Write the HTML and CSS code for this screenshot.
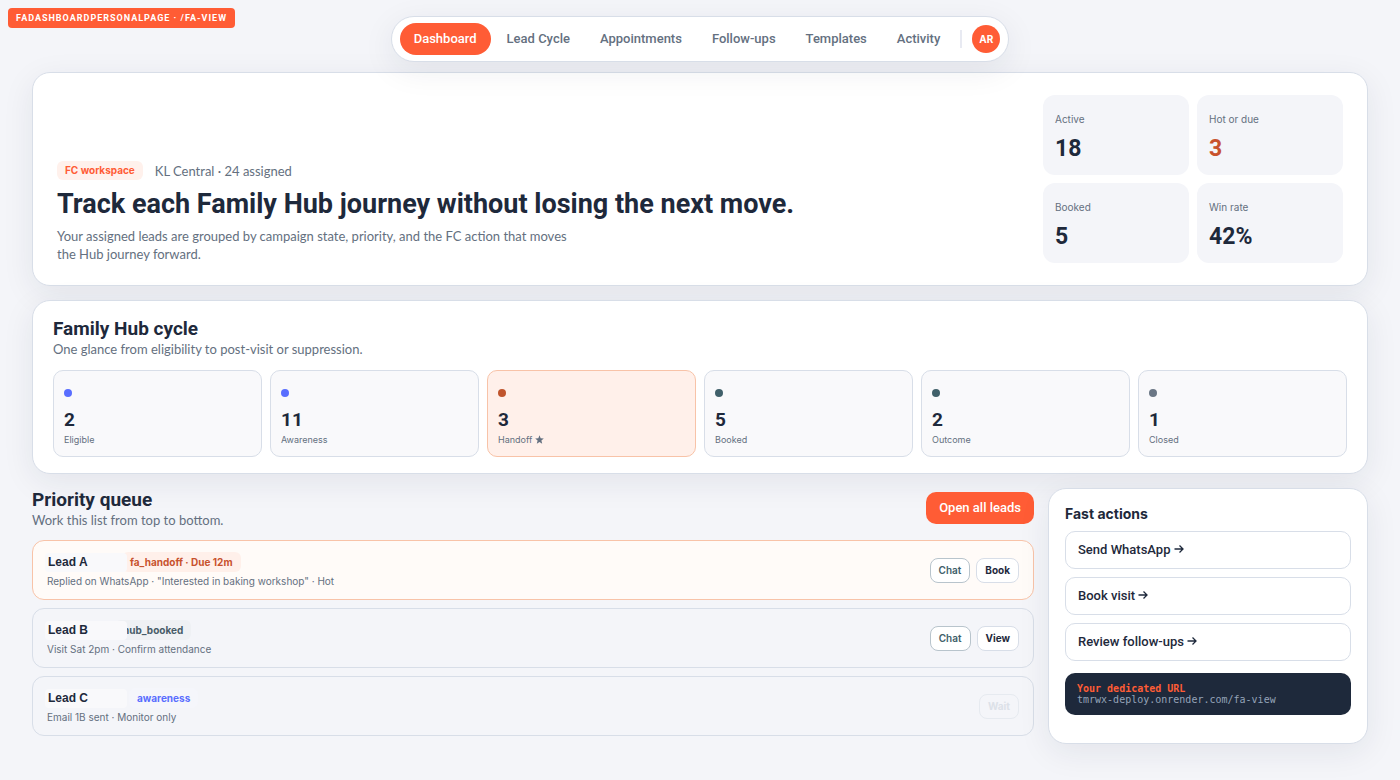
FILE: index.html
```
<!DOCTYPE html>
<html lang="en">
<head>
    <meta charset="UTF-8">
    <meta name="viewport" content="width=device-width, initial-scale=1.0">
    <title>FA Dashboard</title>
    <link rel="stylesheet" href="styles.css">
</head>
<body>
    <div class="page-tag">FADASHBOARDPERSONALPAGE · /FA-VIEW</div>

    <header class="topbar">
        <nav class="nav">
            <a class="nav-link active" href="#dashboard">Dashboard</a>
            <a class="nav-link" href="#cycle">Lead Cycle</a>
            <a class="nav-link" href="#appointments">Appointments</a>
            <a class="nav-link" href="#followups">Follow-ups</a>
            <a class="nav-link" href="#templates">Templates</a>
            <a class="nav-link" href="#activity">Activity</a>
            <span class="nav-divider"></span>
            <span class="avatar">AR</span>
        </nav>
    </header>

    <main>
        <section class="card hero" id="dashboard">
            <div class="hero-text">
                <div class="hero-meta">
                    <span class="pill pill-brand">FC workspace</span>
                    <span class="muted">KL Central · 24 assigned</span>
                </div>
                <h1>Track each Family Hub journey without losing the next move.</h1>
                <p class="lead muted">Your assigned leads are grouped by campaign state, priority, and the FC action that moves the Hub journey forward.</p>
            </div>
            <div class="stats">
                <div class="stat"><span class="stat-label">Active</span><strong>18</strong></div>
                <div class="stat hot"><span class="stat-label">Hot or due</span><strong>3</strong></div>
                <div class="stat"><span class="stat-label">Booked</span><strong>5</strong></div>
                <div class="stat"><span class="stat-label">Win rate</span><strong>42%</strong></div>
            </div>
        </section>

        <section class="card cycle" id="cycle">
            <h2>Family Hub cycle</h2>
            <p class="muted">One glance from eligibility to post-visit or suppression.</p>
            <div class="stages">
                <div class="stage"><i class="dot blue"></i><strong>2</strong><span>Eligible</span></div>
                <div class="stage"><i class="dot blue"></i><strong>11</strong><span>Awareness</span></div>
                <div class="stage current"><i class="dot rust"></i><strong>3</strong><span>Handoff <svg class="star" viewBox="0 0 10 10"><path d="M5 0.3L6.3 3.6L9.8 3.8L7.1 6.1L8 9.6L5 7.7L2 9.6L2.9 6.1L0.2 3.8L3.7 3.6Z"/></svg></span></div>
                <div class="stage"><i class="dot teal"></i><strong>5</strong><span>Booked</span></div>
                <div class="stage"><i class="dot teal"></i><strong>2</strong><span>Outcome</span></div>
                <div class="stage"><i class="dot grey"></i><strong>1</strong><span>Closed</span></div>
            </div>
        </section>

        <div class="columns">
            <section class="queue">
                <div class="queue-head">
                    <div>
                        <h2>Priority queue</h2>
                        <p class="muted">Work this list from top to bottom.</p>
                    </div>
                    <button class="btn-primary" type="button">Open all leads</button>
                </div>

                <article class="row urgent">
                    <div>
                        <div class="row-title">
                            <h3 class="name">Lead A</h3>
                            <span class="pill pill-hot">fa_handoff · Due 12m</span>
                        </div>
                        <p class="row-note">Replied on WhatsApp · "Interested in baking workshop" · Hot</p>
                    </div>
                    <div class="row-actions">
                        <button class="btn-small chat" type="button">Chat</button>
                        <button class="btn-small" type="button">Book</button>
                    </div>
                </article>

                <article class="row">
                    <div>
                        <div class="row-title">
                            <h3 class="name">Lead B</h3>
                            <span class="pill pill-booked">hub_booked</span>
                        </div>
                        <p class="row-note">Visit Sat 2pm · Confirm attendance</p>
                    </div>
                    <div class="row-actions">
                        <button class="btn-small chat" type="button">Chat</button>
                        <button class="btn-small" type="button">View</button>
                    </div>
                </article>

                <article class="row">
                    <div>
                        <div class="row-title">
                            <h3 class="name">Lead C</h3>
                            <span class="pill pill-aware">awareness</span>
                        </div>
                        <p class="row-note">Email 1B sent · Monitor only</p>
                    </div>
                    <div class="row-actions">
                        <button class="btn-small" type="button" disabled>Wait</button>
                    </div>
                </article>
            </section>

            <aside class="card actions">
                <h3>Fast actions</h3>
                <button class="btn-action" type="button">Send WhatsApp <svg viewBox="0 0 10 10"><path d="M0.5 5H9M5.5 1.5L9 5L5.5 8.5"/></svg></button>
                <button class="btn-action" type="button">Book visit <svg viewBox="0 0 10 10"><path d="M0.5 5H9M5.5 1.5L9 5L5.5 8.5"/></svg></button>
                <button class="btn-action" type="button">Review follow-ups <svg viewBox="0 0 10 10"><path d="M0.5 5H9M5.5 1.5L9 5L5.5 8.5"/></svg></button>
                <div class="url-box">
                    <strong>Your dedicated URL</strong>
                    <span>tmrwx-deploy.onrender.com/fa-view</span>
                </div>
            </aside>
        </div>
    </main>
</body>
</html>
```
FILE: styles.css
```
:root {
    --brand: #ff5c35;
    --ink: #1e293b;
    --muted: #647080;
    --line: #d8dee8;
    --bg: #f4f5f9;
    --small: Inter, sans-serif;
}

* {
    box-sizing: border-box;
}

body {
    margin: 0;
    background: var(--bg);
    color: var(--ink);
    font-family: Roboto, sans-serif;
    font-size: 13px;
    line-height: 16px;
}

h1, h2, h3, p {
    margin: 0;
}

h1 {
    font-size: 27px;
    line-height: 30px;
}

h2 {
    font-size: 19px;
    line-height: 24px;
}

button {
    font-family: inherit;
    cursor: pointer;
}

.muted {
    color: var(--muted);
    font-family: Lato, sans-serif;
}

.card {
    background: #fff;
    border: 1px solid var(--line);
    border-radius: 18px;
    box-shadow: 0 8px 32px rgba(30, 41, 59, 0.08);
}

.page-tag {
    position: absolute;
    top: 8px;
    left: 8px;
    padding: 0 8px;
    border-radius: 4px;
    background: var(--brand);
    color: #fff;
    font-size: 9px;
    font-weight: bold;
    line-height: 20px;
    letter-spacing: 1px;
}

/* Navigation */
.topbar {
    position: relative;
    z-index: 5;
    display: flex;
    justify-content: center;
    padding: 16px 0 10px;
    pointer-events: none;
}

.nav {
    display: flex;
    align-items: center;
    gap: 2px;
    padding: 6px 8px;
    background: #fff;
    border: 1px solid var(--line);
    border-radius: 24px;
    box-shadow: 0 8px 32px rgba(30, 41, 59, 0.08);
    pointer-events: auto;
}

.nav-link {
    padding: 8px 14px;
    border-radius: 16px;
    color: var(--muted);
    font-weight: 500;
    text-decoration: none;
}

.nav-link.active {
    background: var(--brand);
    color: #fff;
}

.nav-divider {
    width: 2px;
    height: 18px;
    margin: 0 8px 0 4px;
    background: #e8eaf2;
}

.avatar {
    width: 28px;
    border-radius: 50%;
    background: var(--brand);
    color: #fff;
    font: bold 10px/28px var(--small);
    text-align: center;
}

main {
    display: flex;
    flex-direction: column;
    gap: 14px;
    padding: 0 32px 36px;
}

/* Hero */
.hero {
    display: grid;
    grid-template-columns: 1fr 300px;
    gap: 24px;
    align-items: end;
    padding: 22px 24px;
}

.hero-meta {
    display: flex;
    align-items: center;
    gap: 12px;
    margin-bottom: 9px;
}

.pill {
    padding: 0 8px;
    border-radius: 6px;
    font: bold 10px/19px var(--small);
}

.pill-brand {
    background: #fff1ec;
    color: var(--brand);
}

.lead {
    max-width: 520px;
    margin-top: 8px;
    line-height: 18px;
}

.stats {
    display: grid;
    grid-template-columns: 1fr 1fr;
    gap: 8px;
}

.stat {
    display: flex;
    flex-direction: column;
    gap: 6px;
    padding: 16px 12px 10px;
    border-radius: 12px;
    background: var(--bg);
}

.stat-label {
    color: var(--muted);
    font: 10px/16px var(--small);
}

.stat strong {
    font-size: 23px;
    line-height: 32px;
}

.hot strong {
    color: #c8522d;
}

/* Cycle */
.cycle {
    padding: 16px 20px;
}

.stages {
    display: grid;
    grid-template-columns: repeat(6, 1fr);
    gap: 8px;
    margin-top: 13px;
}

.stage {
    display: flex;
    flex-direction: column;
    padding: 18px 10px 9px;
    border: 1px solid var(--line);
    border-radius: 10px;
    background: #f9f9fb;
}

.stage.current {
    border-color: #f8c3a8;
    background: #fff0ea;
}

.dot {
    width: 8px;
    height: 8px;
    margin-bottom: 11px;
    border-radius: 50%;
}

.blue { background: #596eff; }
.rust { background: #c0552d; }
.teal { background: #40606a; }
.grey { background: #6b7785; }

.stage strong {
    font-size: 19px;
    line-height: 24px;
}

.stage span {
    color: var(--muted);
    font: 9px/15px var(--small);
}

.star {
    width: 9px;
    height: 9px;
    fill: currentColor;
    vertical-align: -1px;
}

/* Queue and side panel */
.columns {
    display: grid;
    grid-template-columns: 1fr 320px;
    gap: 14px;
    align-items: start;
}

.queue {
    display: flex;
    flex-direction: column;
    gap: 8px;
}

.queue-head {
    display: flex;
    justify-content: space-between;
    align-items: center;
    margin-bottom: 4px;
}

.btn-primary {
    padding: 8px 13px;
    border: 0;
    border-radius: 10px;
    background: var(--brand);
    color: #fff;
    font-size: 13px;
    font-weight: 500;
    line-height: 16px;
}

.row {
    display: flex;
    justify-content: space-between;
    align-items: center;
    padding: 11px 14px;
    border: 1px solid var(--line);
    border-radius: 12px;
}

.row.urgent {
    border-color: #f8c3a8;
    background: #fffbf8;
}

.row-title {
    display: flex;
    align-items: center;
    margin-bottom: 2px;
}

/* The name plate sits over the start of the status pill */
.name {
    position: relative;
    z-index: 1;
    width: 82px;
    margin-left: -2px;
    padding-left: 3px;
    border-radius: 4px;
    background: #f9f9fb;
    font: bold 12px/19px "Liberation Sans", sans-serif;
}

.row-title .pill {
    margin-left: -5px;
    line-height: 20px;
}

.pill-hot {
    background: #fff0ea;
    color: #c8522d;
}

.row-title .pill-booked {
    margin-left: -12px;
    background: #eff1f4;
    color: #475c68;
}

.row-title .pill-aware {
    margin-left: 2px;
    background: #f5f6fb;
    color: #596eff;
}

.row-note {
    color: var(--muted);
    font: 10px/14px var(--small);
}

.row-actions {
    display: flex;
    gap: 6px;
}

.btn-small {
    padding: 0 8px;
    border: 1px solid var(--line);
    border-radius: 8px;
    background: #fff;
    color: var(--ink);
    font: bold 10px/23px var(--small);
}

.btn-small.chat {
    border-color: #b8c4cc;
    color: #40606a;
    font-weight: 600;
}

.btn-small:disabled {
    border-color: #e6eaf0;
    background: transparent;
    color: #dce1e8;
}

.actions {
    display: flex;
    flex-direction: column;
    gap: 8px;
    padding: 16px 16px 28px;
}

.actions h3 {
    font: bold 14px/18px var(--small);
}

.btn-action {
    padding: 10px 12px;
    border: 1px solid var(--line);
    border-radius: 10px;
    background: #fff;
    color: var(--ink);
    font-size: 13px;
    font-weight: 500;
    line-height: 16px;
    text-align: left;
}

.btn-action svg {
    width: 10px;
    height: 10px;
    fill: none;
    stroke: currentColor;
    stroke-width: 1.3;
}

.url-box {
    display: flex;
    flex-direction: column;
    margin-top: 4px;
    padding: 10px 12px;
    border-radius: 10px;
    background: var(--ink);
    color: #94a3b8;
    font: 10px/11px "DejaVu Sans Mono", monospace;
}

.url-box strong {
    color: var(--brand);
}
```
